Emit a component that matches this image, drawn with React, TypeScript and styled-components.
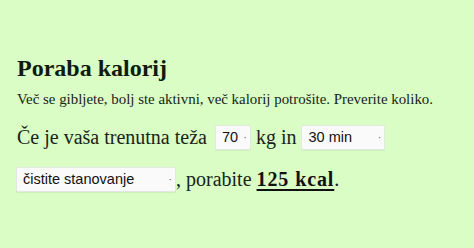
import React from "react";
import styled, { createGlobalStyle } from "styled-components";

const GlobalStyle = createGlobalStyle`
  html, body {
    margin: 0;
    padding: 0;
    background: #d9fdc5;
  }
  body {
    font-family: "Liberation Serif", "Times New Roman", serif;
    color: #182418;
  }
`;

const Page = styled.div`
  width: 474px;
  height: 248px;
  box-sizing: border-box;
  padding: 52px 16px 0;
  overflow: hidden;
`;

const Title = styled.h1`
  margin: 0 0 0 1px;
  font-size: 24px;
  line-height: 32px;
  font-weight: bold;
  color: #0f1b0f;
`;

const Lead = styled.p`
  margin: 4px 0 0 1px;
  font-size: 14.9px;
  line-height: 22px;
`;

const Calc = styled.p`
  margin: 6px 0 0;
  font-size: 20px;
  line-height: 42px;
  max-width: 400px;
`;

const Text = styled.span`
  margin-left: 1px;
`;

const Box = styled.span<{ $w: number; $ml: number }>`
  display: inline-flex;
  align-items: center;
  justify-content: space-between;
  box-sizing: border-box;
  width: ${(p) => p.$w}px;
  height: 25px;
  padding: 0 3px 0 6px;
  margin-left: ${(p) => p.$ml}px;
  vertical-align: 2px;
  background: #fafafa;
  border: 1px solid #e4e8e2;
  border-radius: 2px;
  box-shadow: 0 1px 0 rgba(0, 0, 0, 0.06);
  font-family: "Liberation Sans", Arial, sans-serif;
  font-size: 14.5px;
  color: #111;
  line-height: 1;
`;

const Dot = styled.span`
  font-size: 11px;
  color: #666;
`;

const Result = styled.a`
  font-weight: bold;
  color: #111;
  letter-spacing: 0.9px;
  text-decoration: underline;
  text-decoration-thickness: 2px;
  text-underline-offset: 3px;
`;

const Field: React.FC<{ w: number; ml?: number; value: string }> = ({
  w,
  ml = 0,
  value,
}) => (
  <Box $w={w} $ml={ml}>
    <span>{value}</span>
    <Dot>·</Dot>
  </Box>
);

const App: React.FC = () => {
  return (
    <>
      <GlobalStyle />
      <Page>
        <Title>Poraba kalorij</Title>
        <Lead>
          Več se gibljete, bolj ste aktivni, več kalorij potrošite. Preverite
          koliko.
        </Lead>
        <Calc>
          <Text>Če je vaša trenutna teža</Text> <Field w={36} ml={3} value="70" />{" "}
          kg in <Field w={84} ml={0} value="30 min" />{" "}
          <Field w={160} value="čistite stanovanje" />, porabite{" "}
          <Result>125 kcal</Result>.
        </Calc>
      </Page>
    </>
  );
};

export default App;
